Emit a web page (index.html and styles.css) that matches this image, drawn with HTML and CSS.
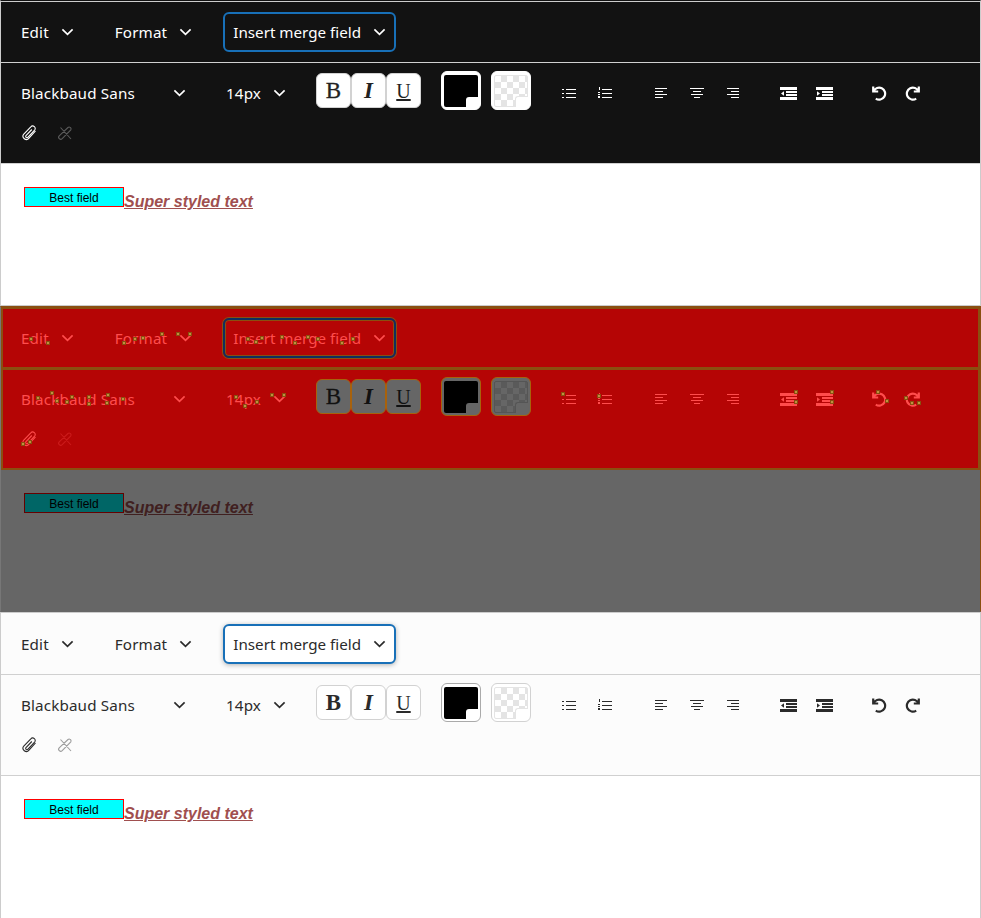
FILE: index.html
```html
<!DOCTYPE html>
<html lang="en">
<head>
    <meta charset="UTF-8">
    <meta name="viewport" content="width=device-width, initial-scale=1.0">
    <title>Text editor themes</title>
    <link rel="stylesheet" href="styles.css">
</head>
<body>
    <!-- Shared icons -->
    <svg class="sprites" width="0" height="0">
        <symbol id="i-chevron" viewBox="0 0 14 8"><path d="M1.500 1.200 7 6.600l5.500-5.400" fill="none" stroke="currentColor" stroke-width="1.800"/></symbol>
        <symbol id="i-bullets" viewBox="0 0 16 12"><path d="M5 2h10v1H5zM5 6h10v1H5zM5 10h10v1H5zM1 2h2v1H1zM1 6h2v1H1zM1 10h2v1H1z" fill="currentColor"/></symbol>
        <symbol id="i-numbers" viewBox="0 0 16 12"><path d="M5 2h10v1H5zM5 6h10v1H5zM5 10h10v1H5zM2 0h1v3H2zM1 5h2v1H1zM1 7h2v1H1zM1 9h2v2H1z" fill="currentColor"/></symbol>
        <symbol id="i-left" viewBox="0 0 14 12"><path d="M1 1h12v1H1zM1 4h8v1H1zM1 7h12v1H1zM1 10h8v1H1z" fill="currentColor"/></symbol>
        <symbol id="i-center" viewBox="0 0 14 12"><path d="M0 1h14v1H0zM3 4h8v1H3zM1 7h12v1H1zM4 10h6v1H4z" fill="currentColor"/></symbol>
        <symbol id="i-right" viewBox="0 0 14 12"><path d="M1 1h12v1H1zM5 4h8v1H5zM1 7h12v1H1zM5 10h8v1H5z" fill="currentColor"/></symbol>
        <symbol id="i-outdent" viewBox="0 0 17 13"><path d="M0 0h17v3H0zM6 4h11v2H6zM6 7h11v2H6zM0 10h17v3H0zM4 4.200v4.600L1 6.500z" fill="currentColor"/></symbol>
        <symbol id="i-indent" viewBox="0 0 17 13"><path d="M0 0h17v3H0zM6 4h11v2H6zM6 7h11v2H6zM0 10h17v3H0zM1 4.200v4.600l3-2.300z" fill="currentColor"/></symbol>
        <symbol id="i-undo" viewBox="0 0 16 16"><path d="M2.200 1.500v5h5M2.600 6.300A6 6 0 1 1 4.800 13.600" fill="none" stroke="currentColor" stroke-width="2.200"/></symbol>
        <symbol id="i-redo" viewBox="0 0 16 16"><path d="M13.800 1.500v5h-5M13.400 6.300A6 6 0 1 0 11.200 13.600" fill="none" stroke="currentColor" stroke-width="2.200"/></symbol>
        <symbol id="i-clip" viewBox="0 0 16 16"><path d="M14.500 6 8 13.200a3.300 3.300 0 0 1-5.200-4.200L9.800 1.800a2.500 2.500 0 0 1 3.800 3.300L7 12.200a1.300 1.300 0 0 1-2-1.700L10.800 4.500" fill="none" stroke="currentColor" stroke-width="1.100"/></symbol>
        <symbol id="i-unlink" viewBox="0 0 16 16"><path d="M3.500 2.500 14 14M12.800 2.200a1.800 1.800 0 0 1 1 2.600L5.200 13.600a2 2 0 0 1-3-2.800L11 2.500a1.800 1.800 0 0 1 1.800-.3z" fill="none" stroke="currentColor" stroke-width="1.100"/></symbol>
    </svg>

    <section class="editor-block dark">
        <div class="toolbar menubar">
            <button class="menu">Edit<svg class="chevron"><use href="#i-chevron"/></svg></button>
            <button class="menu">Format<svg class="chevron"><use href="#i-chevron"/></svg></button>
            <button class="menu focused">Insert merge field<svg class="chevron"><use href="#i-chevron"/></svg></button>
        </div>
        <div class="toolbar tools">
            <button class="menu font-select">Blackbaud Sans<svg class="chevron"><use href="#i-chevron"/></svg></button>
            <button class="menu size-select">14px<svg class="chevron"><use href="#i-chevron"/></svg></button>
            <div class="group style-btns">
                <button class="style-btn bold">B</button>
                <button class="style-btn italic">I</button>
                <button class="style-btn under">U</button>
            </div>
            <div class="group swatches">
                <div class="swatch"><div class="fill black"></div></div>
                <div class="swatch"><div class="fill checks"></div></div>
            </div>
            <div class="group"><button class="icon"><svg class="sm"><use href="#i-bullets"/></svg></button><button class="icon"><svg class="sm"><use href="#i-numbers"/></svg></button></div>
            <div class="group"><button class="icon"><svg class="al"><use href="#i-left"/></svg></button><button class="icon"><svg class="al"><use href="#i-center"/></svg></button><button class="icon"><svg class="al"><use href="#i-right"/></svg></button></div>
            <div class="group"><button class="icon"><svg class="ind"><use href="#i-outdent"/></svg></button><button class="icon"><svg class="ind"><use href="#i-indent"/></svg></button></div>
            <div class="group history"><button class="icon"><svg class="hist"><use href="#i-undo"/></svg></button><button class="icon"><svg class="hist"><use href="#i-redo"/></svg></button></div>
            <div class="group"><button class="icon"><svg class="hist"><use href="#i-clip"/></svg></button><button class="icon off"><svg class="hist"><use href="#i-unlink"/></svg></button></div>
        </div>
        <div class="content"><span class="field">Best field</span><a class="styled">Super styled text</a></div>
    </section>

    <section class="editor-block diff">
        <div class="toolbar menubar">
            <button class="menu">Edit<svg class="chevron"><use href="#i-chevron"/></svg></button>
            <button class="menu">Format<svg class="chevron"><use href="#i-chevron"/></svg></button>
            <button class="menu focused">Insert merge field<svg class="chevron"><use href="#i-chevron"/></svg></button>
        </div>
        <div class="toolbar tools">
            <button class="menu font-select">Blackbaud Sans<svg class="chevron"><use href="#i-chevron"/></svg></button>
            <button class="menu size-select">14px<svg class="chevron"><use href="#i-chevron"/></svg></button>
            <div class="group style-btns">
                <button class="style-btn bold">B</button>
                <button class="style-btn italic">I</button>
                <button class="style-btn under">U</button>
            </div>
            <div class="group swatches">
                <div class="swatch"><div class="fill black"></div></div>
                <div class="swatch"><div class="fill checks"></div></div>
            </div>
            <div class="group"><button class="icon"><svg class="sm"><use href="#i-bullets"/></svg></button><button class="icon"><svg class="sm"><use href="#i-numbers"/></svg></button></div>
            <div class="group"><button class="icon"><svg class="al"><use href="#i-left"/></svg></button><button class="icon"><svg class="al"><use href="#i-center"/></svg></button><button class="icon"><svg class="al"><use href="#i-right"/></svg></button></div>
            <div class="group"><button class="icon"><svg class="ind"><use href="#i-outdent"/></svg></button><button class="icon"><svg class="ind"><use href="#i-indent"/></svg></button></div>
            <div class="group history"><button class="icon"><svg class="hist"><use href="#i-undo"/></svg></button><button class="icon"><svg class="hist"><use href="#i-redo"/></svg></button></div>
            <div class="group"><button class="icon"><svg class="hist"><use href="#i-clip"/></svg></button><button class="icon off"><svg class="hist"><use href="#i-unlink"/></svg></button></div>
        </div>
        <div class="content"><span class="field">Best field</span><a class="styled">Super styled text</a></div>
        <!-- Mismatch specks over the text and icons -->
        <svg class="specks" width="981" height="163">
            <defs>
                <path id="speck-dots" d="M31 33h.01M48 37h.01M124 37h.01M135 33h.01M143 32h.01M162 28h.01M178 28h.01M190 28h.01M248 33h.01M256 36h.01M262 32h.01M282 31h.01M295 37h.01M308 31h.01M318 33h.01M342 37h.01M353 33h.01M52 87h.01M38 92h.01M57 95h.01M67 96h.01M72 91h.01M89 91h.01M89 98h.01M108 89h.01M107 97h.01M123 93h.01M236 91h.01M245 100h.01M257 96h.01M272 89h.01M284 89h.01M23 138h.01M30 136h.01M563 88h.01M599 90h.01M796 86h.01M796 96h.01M832 86h.01M832 96h.01M878 86h.01M887 95h.01M906 92h.01M912 97h.01M919 97h.01"/>
            </defs>
            <use href="#speck-dots" stroke="#8a4f10" stroke-width="4" stroke-linecap="square"/>
            <use href="#speck-dots" stroke="#c09040" stroke-width="2" stroke-linecap="square"/>
        </svg>
    </section>

    <section class="editor-block light">
        <div class="toolbar menubar">
            <button class="menu">Edit<svg class="chevron"><use href="#i-chevron"/></svg></button>
            <button class="menu">Format<svg class="chevron"><use href="#i-chevron"/></svg></button>
            <button class="menu focused">Insert merge field<svg class="chevron"><use href="#i-chevron"/></svg></button>
        </div>
        <div class="toolbar tools">
            <button class="menu font-select">Blackbaud Sans<svg class="chevron"><use href="#i-chevron"/></svg></button>
            <button class="menu size-select">14px<svg class="chevron"><use href="#i-chevron"/></svg></button>
            <div class="group style-btns">
                <button class="style-btn bold">B</button>
                <button class="style-btn italic">I</button>
                <button class="style-btn under">U</button>
            </div>
            <div class="group swatches">
                <div class="swatch"><div class="fill black"></div></div>
                <div class="swatch"><div class="fill checks"></div></div>
            </div>
            <div class="group"><button class="icon"><svg class="sm"><use href="#i-bullets"/></svg></button><button class="icon"><svg class="sm"><use href="#i-numbers"/></svg></button></div>
            <div class="group"><button class="icon"><svg class="al"><use href="#i-left"/></svg></button><button class="icon"><svg class="al"><use href="#i-center"/></svg></button><button class="icon"><svg class="al"><use href="#i-right"/></svg></button></div>
            <div class="group"><button class="icon"><svg class="ind"><use href="#i-outdent"/></svg></button><button class="icon"><svg class="ind"><use href="#i-indent"/></svg></button></div>
            <div class="group history"><button class="icon"><svg class="hist"><use href="#i-undo"/></svg></button><button class="icon"><svg class="hist"><use href="#i-redo"/></svg></button></div>
            <div class="group"><button class="icon"><svg class="hist"><use href="#i-clip"/></svg></button><button class="icon off"><svg class="hist"><use href="#i-unlink"/></svg></button></div>
        </div>
        <div class="content"><span class="field">Best field</span><a class="styled">Super styled text</a></div>
    </section>
</body>
</html>
```

FILE: styles.css
```css
* {
    box-sizing: border-box;
}
body {
    margin: 0;
    font-family: "Noto Sans", sans-serif;
    background: white;
}
.sprites {
    position: absolute;
}
button {
    font: inherit;
    color: inherit;
    background: none;
    border: none;
    padding: 0;
}
.editor-block {
    height: 306px;
    display: flex;
    flex-direction: column;
    border: 1px solid #ccc;
    color: #2b2b2b;
}
.toolbar {
    display: flex;
    flex-wrap: wrap;
    align-items: flex-start;
    padding: 11px 10px 9px;
    border-bottom: 1px solid #d0d0d0;
    background: #fcfcfc;
}
.menubar {
    height: 62px;
    gap: 21px;
}
.tools {
    height: 101px;
    padding: 10px;
    column-gap: 20px;
}
.menu {
    height: 40px;
    display: flex;
    align-items: center;
    justify-content: space-between;
    padding: 0 8px;
    gap: 12px;
    font-size: 15.2px;
    letter-spacing: 0.15px;
    border: 2px solid transparent;
    border-radius: 6px;
}
.focused {
    letter-spacing: 0;
    border-color: #1870b8;
    background: white;
    box-shadow: 0 1px 5px rgba(0, 0, 0, 0.3);
}
.font-select {
    width: 185px;
}
.size-select {
    width: 80px;
    padding-right: 10px;
}
.chevron {
    width: 13px;
    height: 8px;
    flex-shrink: 0;
}
.group {
    display: flex;
}
.style-btn {
    width: 35px;
    height: 35px;
    border: 1px solid #d2d2d2;
    border-radius: 6px;
    background: white;
    font-family: "Liberation Serif", serif;
    font-size: 23px;
    line-height: 1;
}
.bold {
    font-weight: bold;
}
.italic {
    font-style: italic;
    font-weight: bold;
}
.under {
    text-decoration: underline;
    font-size: 20px;
}
.swatches {
    gap: 10px;
    margin-top: -2px;
}
.swatch {
    width: 40px;
    height: 39px;
    padding: 3px 2px 2px;
    border: 1px solid #aaa;
    border-radius: 6px;
    background: white;
}
.swatch + .swatch {
    border-color: #d2d2d2;
}
.fill {
    position: relative;
    height: 100%;
    border-radius: 2px;
}
.fill::after {
    content: "";
    position: absolute;
    right: 0;
    bottom: 0;
    width: 12px;
    height: 10px;
    background: white;
    border-radius: 3px 0 0 0;
}
.black {
    background: black;
}
.checks {
    border: 1px solid #e4e4e4;
    background: repeating-conic-gradient(#e4e4e4 0 25%, white 0 50%) 0 0 / 12px 12px;
}
.checks::after {
    right: -1px;
    bottom: -1px;
    border-top: 1px solid #e4e4e4;
    border-left: 1px solid #e4e4e4;
}
.icon {
    width: 36px;
    height: 40px;
    display: flex;
    align-items: center;
    justify-content: center;
}
.off {
    opacity: 0.45;
}
.history {
    margin-left: -1px;
}
.history .icon {
    width: 34px;
}
.sm {
    width: 16px;
    height: 12px;
}
.al {
    width: 14px;
    height: 12px;
}
.ind {
    width: 17px;
    height: 13px;
    margin-left: -1px;
}
.hist {
    width: 16px;
    height: 16px;
}
.content {
    flex: 1;
    padding: 23px 23px 0;
    background: white;
}
.field {
    display: inline-block;
    width: 100px;
    height: 20px;
    border: 1px solid red;
    background: cyan;
    color: black;
    font: 12px/20px "Liberation Sans", sans-serif;
    text-align: center;
    vertical-align: 5px;
}
.styled {
    font: italic bold 16px "Liberation Sans", sans-serif;
    text-decoration: underline;
    color: #a04f4f;
}

/* Dark theme */
.dark {
    color: white;
    border-top-color: #121212;
}
.dark .toolbar {
    background: #121212;
}
.dark .menubar {
    box-shadow: inset 0 1px #ccc;
}
.dark .focused {
    background: none;
    box-shadow: none;
}
.dark .style-btn {
    color: #222;
}
.dark .bold, .diff .bold {
    font-weight: normal;
    -webkit-text-stroke: 0.3px;
}
.dark .swatch {
    border-color: white;
}
.dark .off {
    opacity: 0.3;
}

/* Diff theme */
.diff {
    position: relative;
    color: #ff4d4d;
    border-color: #8a4f10 #8a4f10 #666 #777;
}
.diff .toolbar {
    background: #b50505;
    border-bottom-color: #8a4f10;
    box-shadow: inset 2px 0 #8a4f10, inset -2px 0 #8a4f10, inset 0 1px #8a4f10, inset 0 -1px #8a4f10;
}
.diff .menubar {
    box-shadow: inset 2px 0 #8a4f10, inset -2px 0 #8a4f10, inset 0 2px #8a4f10, inset 0 -1px #8a4f10;
}
.diff .menu.focused {
    background: none;
    box-shadow: 0 0 0 1px #8a4f10, inset 0 0 0 1px #8a4f10;
    border-color: #0f3060;
}
.diff .style-btn {
    background: #666;
    border-color: #a8620c;
    color: #111;
}
.diff .swatch {
    background: #666;
    border-color: #a8620c;
}
.diff .fill::after {
    background: #666;
}
.diff .checks {
    border-color: #555;
    background: repeating-conic-gradient(#5a5a5a 0 25%, #666 0 50%) 0 0 / 12px 12px;
}
.diff .checks::after {
    border-color: #555;
}
.diff .off {
    opacity: 0.3;
}
.diff .content {
    background: #666;
}
.diff .field {
    border-color: #660000;
    background: #006666;
}
.diff .styled {
    color: #402020;
}
.specks {
    position: absolute;
    top: -1px;
    left: -1px;
}

/* Light theme */
.light {
    border-bottom: none;
}
```
